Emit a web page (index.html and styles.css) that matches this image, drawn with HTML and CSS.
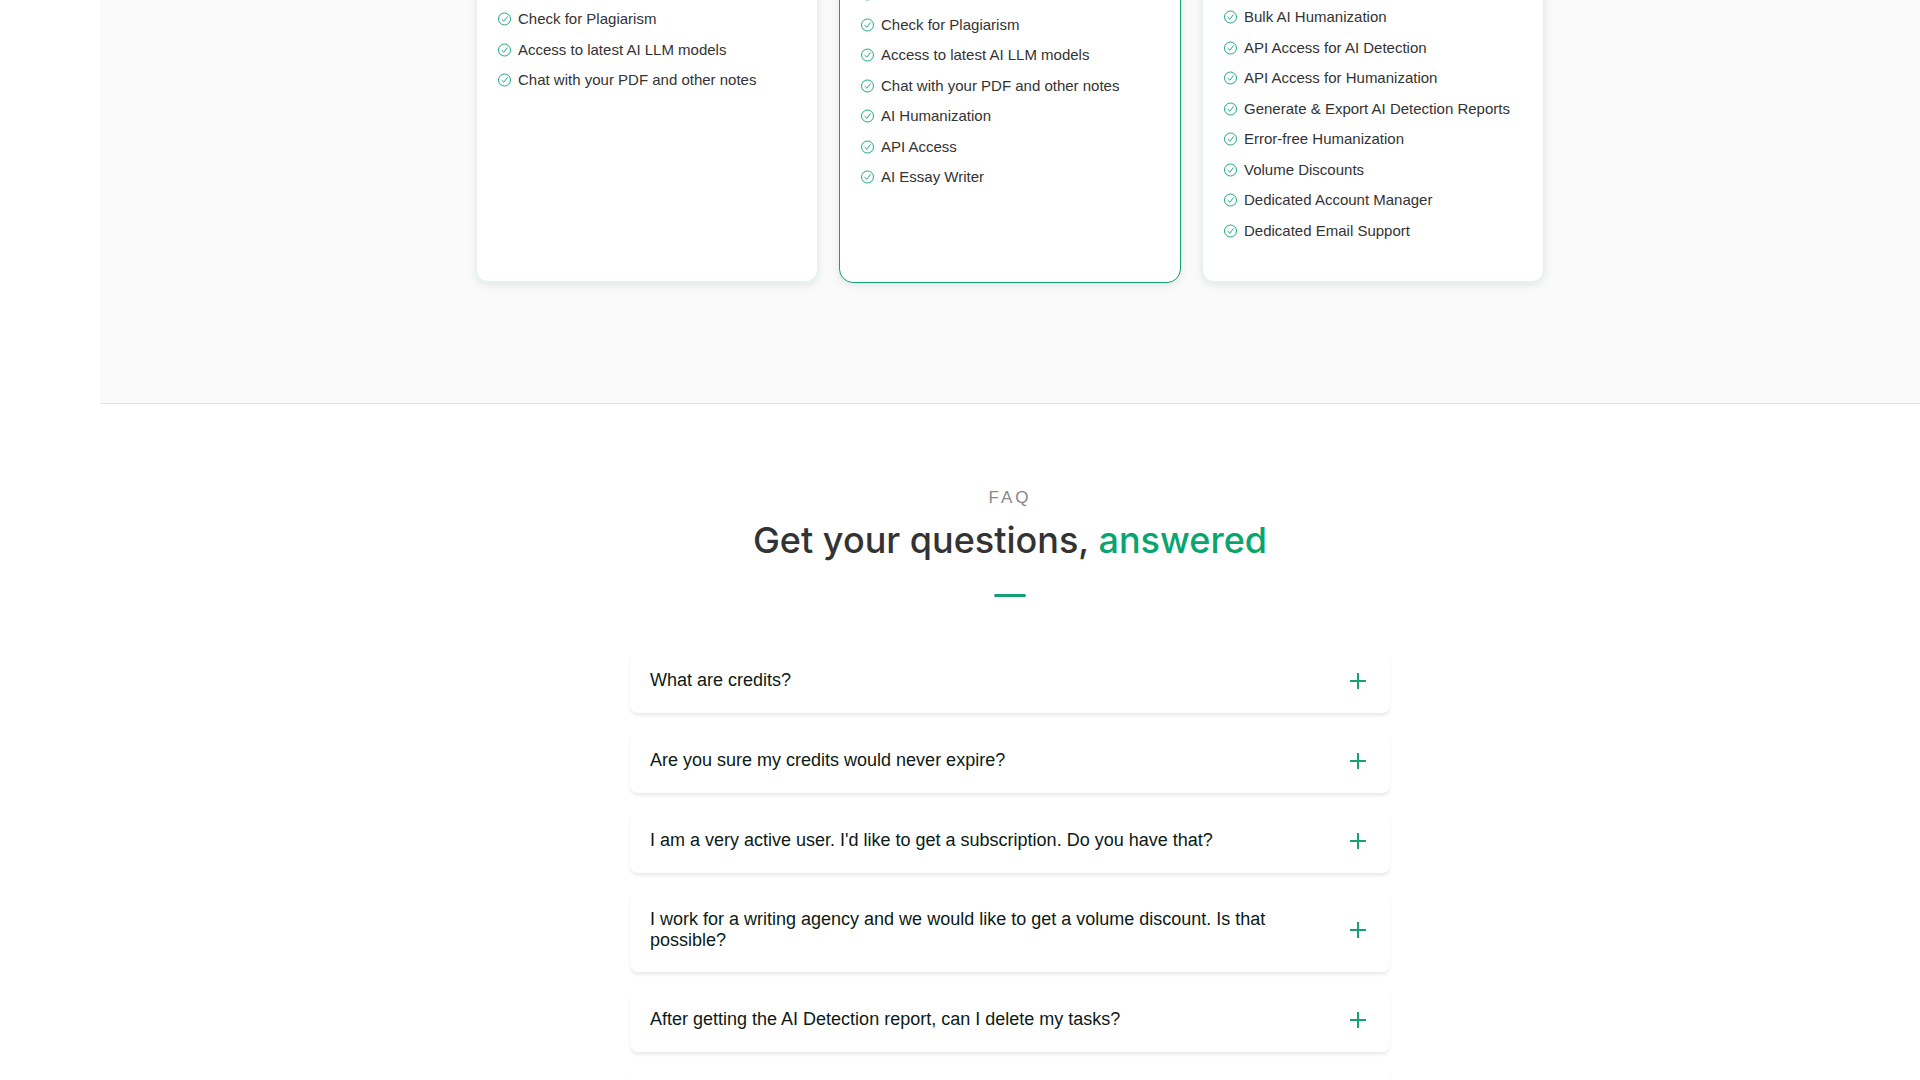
FILE: index.html
```html
<!DOCTYPE html>
<html lang="en">
<head>
    <meta charset="UTF-8">
    <meta name="viewport" content="width=device-width, initial-scale=1.0">
    <title>Pricing</title>
    <link rel="stylesheet" href="styles.css">
</head>
<body>

<svg class="sprite" aria-hidden="true">
    <symbol id="check" viewBox="0 0 14 14">
        <circle cx="7.5" cy="7" r="6" fill="none" stroke="currentColor"/>
        <path d="M4.9 7.3l1.9 1.9 3.5-4.4" fill="none" stroke="currentColor" stroke-linecap="round" stroke-linejoin="round"/>
    </symbol>
    <symbol id="plus" viewBox="0 0 16 16">
        <path d="M7 0h2v7h7v2H9v7H7V9H0V7h7z" fill="currentColor"/>
    </symbol>
</svg>

<main class="page">
    <section class="pricing">
        <div class="plans">
            <div class="plan plan-basic">
                <ul class="features">
                    <li><svg class="check"><use href="#check"/></svg>Check for Plagiarism</li>
                    <li><svg class="check"><use href="#check"/></svg>Access to latest AI LLM models</li>
                    <li><svg class="check"><use href="#check"/></svg>Chat with your PDF and other notes</li>
                </ul>
            </div>
            <div class="plan plan-popular">
                <ul class="features">
                    <li><svg class="check"><use href="#check"/></svg></li>
                    <li><svg class="check"><use href="#check"/></svg>Check for Plagiarism</li>
                    <li><svg class="check"><use href="#check"/></svg>Access to latest AI LLM models</li>
                    <li><svg class="check"><use href="#check"/></svg>Chat with your PDF and other notes</li>
                    <li><svg class="check"><use href="#check"/></svg>AI Humanization</li>
                    <li><svg class="check"><use href="#check"/></svg>API Access</li>
                    <li><svg class="check"><use href="#check"/></svg>AI Essay Writer</li>
                </ul>
            </div>
            <div class="plan plan-business">
                <ul class="features">
                    <li><svg class="check"><use href="#check"/></svg>Bulk AI Humanization</li>
                    <li><svg class="check"><use href="#check"/></svg>API Access for AI Detection</li>
                    <li><svg class="check"><use href="#check"/></svg>API Access for Humanization</li>
                    <li><svg class="check"><use href="#check"/></svg>Generate &amp; Export AI Detection Reports</li>
                    <li><svg class="check"><use href="#check"/></svg>Error-free Humanization</li>
                    <li><svg class="check"><use href="#check"/></svg>Volume Discounts</li>
                    <li><svg class="check"><use href="#check"/></svg>Dedicated Account Manager</li>
                    <li><svg class="check"><use href="#check"/></svg>Dedicated Email Support</li>
                </ul>
            </div>
        </div>
    </section>

    <section class="faq">
        <p class="eyebrow">FAQ</p>
        <h2>Get your questions, <span>answered</span></h2>
        <div class="divider"></div>

        <div class="questions">
            <button type="button" class="question" aria-expanded="false">What are credits?<svg class="plus"><use href="#plus"/></svg></button>
            <button type="button" class="question" aria-expanded="false">Are you sure my credits would never expire?<svg class="plus"><use href="#plus"/></svg></button>
            <button type="button" class="question" aria-expanded="false">I am a very active user. I'd like to get a subscription. Do you have that?<svg class="plus"><use href="#plus"/></svg></button>
            <button type="button" class="question" aria-expanded="false">I work for a writing agency and we would like to get a volume discount. Is that possible?<svg class="plus"><use href="#plus"/></svg></button>
            <button type="button" class="question" aria-expanded="false">After getting the AI Detection report, can I delete my tasks?<svg class="plus"><use href="#plus"/></svg></button>
            <div class="question"></div>
        </div>
    </section>
</main>

</body>
</html>
```

FILE: styles.css
```css
* {
    box-sizing: border-box;
}
body {
    margin: 0;
    height: 100vh;
    overflow: hidden;
    font-family: "Liberation Sans", Arial, sans-serif;
    background-color: #fff;
    color: #333;
}
.sprite {
    display: none;
}
.page {
    margin-left: 100px;
}

/* pricing */
.pricing {
    padding: 0 20px 120px;
    overflow: hidden;
    background-color: #fafafa;
    border-bottom: 1px solid #e4e4e4;
}
.plans {
    display: grid;
    grid-template-columns: repeat(3, 1fr);
    gap: 21px;
    max-width: 1068px;
    margin: -21px auto 0;
}
.plan {
    padding: 28px 20px 40px;
    background-color: #fff;
    border: 1px solid #e3f2ec;
    border-radius: 12px;
    box-shadow: inset 0 -1px 0 #e3f2ec, 0 2px 8px rgba(0, 60, 40, 0.1);
}
.plan-popular {
    padding-top: 3px;
    border-color: #16a077;
    border-radius: 14px;
    box-shadow: 0 2px 8px rgba(0, 60, 40, 0.1);
}
.plan-business {
    padding-top: 26px;
}
.features {
    display: flex;
    flex-direction: column;
    gap: 8px;
    margin: 0;
    padding: 0;
    list-style: none;
    font-size: 15px;
    line-height: 1.5;
}
.features li {
    display: flex;
    align-items: center;
    gap: 7px;
    min-height: 1.5em;
}
.check {
    flex: none;
    width: 14px;
    height: 14px;
    color: #1cab7c;
}

/* faq */
.faq {
    display: flex;
    flex-direction: column;
    align-items: center;
    padding: 84px 20px 40px;
}
.eyebrow {
    margin: 0;
    font-size: 17px;
    line-height: 20px;
    letter-spacing: 3px;
    color: #888;
}
h2 {
    margin: 7px 0 0;
    font-family: Inter, sans-serif;
    font-size: 36px;
    font-weight: 500;
    line-height: 50px;
    color: #333;
}
h2 span {
    color: #09a56f;
}
.divider {
    width: 32px;
    height: 3px;
    margin: 29px 0 52px;
    border-radius: 2px;
    background-color: #16a077;
}
.questions {
    display: flex;
    flex-direction: column;
    gap: 16px;
    width: 100%;
    max-width: 760px;
}
.question {
    display: flex;
    align-items: center;
    justify-content: space-between;
    gap: 24px;
    min-height: 64px;
    padding: 20px 24px 21px 20px;
    border: none;
    border-radius: 8px;
    background-color: #fff;
    box-shadow: 0 3px 3px rgba(0, 0, 0, 0.07);
    font-family: inherit;
    font-size: 18px;
    line-height: 21px;
    text-align: left;
    color: #0c1a15;
    cursor: pointer;
}
.plus {
    flex: none;
    width: 16px;
    height: 16px;
    color: #16a077;
}
```
